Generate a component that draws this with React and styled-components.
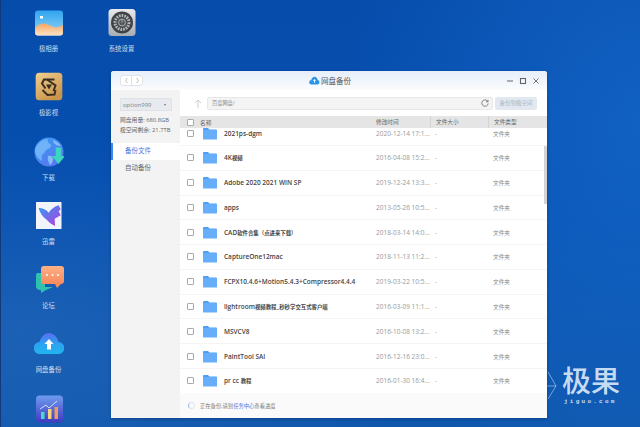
import * as React from 'react';
import styled, { createGlobalStyle } from 'styled-components';

const CJK = '"Open Sans", "Noto Sans CJK SC", sans-serif';

const GlobalStyle = createGlobalStyle`
  html, body { margin: 0; padding: 0; background: #0a52b2; }
  * { box-sizing: border-box; }
`;

const Desktop = styled.div`
  position: relative;
  width: 640px;
  height: 427px;
  overflow: hidden;
  font-family: ${CJK};
  border-left: 1px solid #123a78;
  background:
    radial-gradient(ellipse 420px 190px at 20px 330px, rgba(70, 130, 200, 0.28), rgba(70, 130, 200, 0) 100%),
    radial-gradient(ellipse 300px 420px at 640px 120px, rgba(30, 120, 220, 0.45), rgba(30, 120, 220, 0) 100%),
    linear-gradient(180deg, #064cab 0%, #0650b0 50%, #0f57ad 100%);
`;

const IconGrid = styled.div`
  display: grid;
  grid-auto-flow: column;
  grid-template-rows: repeat(7, 64.3px);
  grid-template-columns: repeat(2, 73px);
  padding: 8px 0 0 11px;
`;

const DeskItem = styled.div`
  display: flex;
  flex-direction: column;
  align-items: center;
`;

const DeskIcon = styled.svg`
  width: 30px;
  height: 30px;
  flex: none;
  display: block;
`;

const DeskLabel = styled.span`
  margin-top: 6px;
  font-size: 6.4px;
  line-height: 10px;
  color: rgba(255, 255, 255, 0.82);
`;

const Window = styled.div`
  position: absolute;
  left: 110px;
  top: 71px;
  width: 436px;
  height: 347px;
  display: flex;
  flex-direction: column;
  background: #fff;
  border-radius: 3px 3px 0 0;
  box-shadow: 0 1px 3px rgba(0, 20, 60, 0.35);
  overflow: hidden;
`;

const TitleBar = styled.div`
  position: relative;
  height: 19px;
  flex: none;
  display: flex;
  align-items: center;
  justify-content: space-between;
  padding: 0 7px 0 9px;
  background: linear-gradient(180deg, #e6eefb 0%, #fbfcfe 100%);
`;

const NavButtons = styled.div`
  display: flex;
  width: 23px;
  height: 11px;
  background: #fff;
  border: 1px solid #dfe3e8;
  border-radius: 3px;
`;

const NavButton = styled.span`
  flex: 1;
  display: flex;
  align-items: center;
  justify-content: center;
  color: #a9aeb5;
  & + & { border-left: 1px solid #dfe3e8; }
`;

const Title = styled.div`
  position: absolute;
  left: 198px;
  top: 0;
  height: 19px;
  display: flex;
  align-items: center;
  gap: 1px;
  font-size: 7.5px;
  color: #555;
`;

const WindowControls = styled.div`
  display: flex;
  gap: 5px;
  color: #666;
`;

const Body = styled.div`
  flex: 1;
  display: flex;
  min-height: 0;
`;

const Sidebar = styled.aside`
  width: 69px;
  flex: none;
  background: #f3f3f3;
  padding-top: 8px;
`;

const AccountSelect = styled.div`
  margin-left: 9px;
  width: 52px;
  height: 13px;
  display: flex;
  align-items: center;
  justify-content: space-between;
  padding: 0 5px 0 2px;
  font-size: 6px;
  color: #7d858e;
  background: #e7ebf0;
  border: 1px solid #dfe3e8;
`;

const Caret = styled.span`
  width: 0;
  height: 0;
  border-left: 1.5px solid transparent;
  border-right: 1.5px solid transparent;
  border-top: 2px solid #777;
`;

const Quota = styled.div`
  margin: 4px 0 8px 9px;
  font-size: 5.8px;
  line-height: 10px;
  color: #666;
  white-space: nowrap;
`;

const MenuItem = styled.div`
  height: 16.5px;
  line-height: 16.5px;
  padding-left: ${p => (p.$active ? '12px' : '14px')};
  font-size: 6.5px;
  color: ${p => (p.$active ? '#4a78e0' : '#666')};
  background: ${p => (p.$active ? '#fff' : 'transparent')};
  border-left: ${p => (p.$active ? '2px solid #3d86f0' : '0')};
`;

const Main = styled.main`
  position: relative;
  flex: 1;
  min-width: 0;
  display: flex;
  flex-direction: column;
`;

const Toolbar = styled.div`
  height: 26px;
  flex: none;
  display: flex;
  align-items: center;
  padding: 0 10px 0 14px;
`;

const UpArrow = styled.span`
  width: 13px;
  flex: none;
  display: flex;
  color: #c9ccd0;
`;

const PathField = styled.div`
  flex: 1;
  height: 13px;
  display: flex;
  align-items: center;
  justify-content: space-between;
  padding: 0 3px 0 4px;
  font-size: 5.2px;
  color: #888;
  background: #f4f4f4;
  border: 1px solid #e8e8e8;
  border-radius: 2px;
`;

const RefreshIcon = styled.span`
  display: flex;
  color: #666;
`;

const BackupButton = styled.div`
  width: 42px;
  height: 13px;
  flex: none;
  margin-left: 2px;
  text-align: center;
  font-size: 5.5px;
  line-height: 13px;
  color: #a9b4c2;
  background: #e2e8ef;
  border-radius: 2px;
`;

const HeaderRow = styled.div`
  height: 12px;
  flex: none;
  display: flex;
  align-items: center;
  background: #e5e5e5;
  font-size: 5.7px;
  color: #666;
`;

const Check = styled.span`
  width: 7px;
  height: 7px;
  flex: none;
  margin: 0 6px 0 7px;
  background: #fff;
  border: 1px solid #aaa;
  border-radius: 1px;
`;

const HeadName = styled.span`
  width: 171px;
  flex: none;
`;

const HeadCell = styled.span`
  width: ${p => p.$w}px;
  flex: none;
  height: 100%;
  line-height: 12px;
  padding-left: 5px;
  border-right: ${p => (p.$line ? '1px solid #d3d3d3' : '0')};
`;

const List = styled.div`
  flex: 1;
  min-height: 0;
  overflow: hidden;
`;

const Rows = styled.div`
  margin-top: -6.9px;
`;

const Row = styled.div`
  height: 24.8px;
  display: flex;
  align-items: center;
  font-size: 6.5px;
  border-bottom: 1px solid #f4f4f4;
`;

const RowCheck = styled(Check)`
  margin-right: 9px;
`;

const Folder = styled.svg`
  width: 14px;
  height: 13px;
  flex: none;
  margin-right: 7px;
`;

const RowName = styled.span`
  width: 152px;
  flex: none;
  font-size: 6.5px;
  font-weight: 600;
  color: #444;
  white-space: nowrap;
  overflow: hidden;
`;

const CjkRun = styled.span`
  font-size: 5.4px;
`;

const RowDate = styled.span`
  width: 59px;
  flex: none;
  color: #999;
  white-space: nowrap;
`;

const RowSize = styled.span`
  width: 58px;
  flex: none;
  color: #aaa;
`;

const RowType = styled.span`
  font-size: 5.7px;
  color: #8a8a8a;
`;

const ScrollThumb = styled.div`
  position: absolute;
  right: 0;
  top: 56px;
  width: 3px;
  height: 58px;
  background: #d4d4d4;
`;

const Footer = styled.div`
  height: 25px;
  flex: none;
  display: flex;
  align-items: center;
  gap: 5px;
  padding-left: 8px;
  font-size: 5.3px;
  color: #777;
  background: #fafafa;
`;

const Spinner = styled.span`
  width: 7px;
  height: 7px;
  border-radius: 50%;
  border: 1px solid #dfe5ef;
  border-left-color: #9db8e8;
`;

const TaskLink = styled.span`
  color: #4a78e0;
`;

const Watermark = styled.div`
  position: absolute;
  left: 561px;
  top: 364px;
  display: flex;
  flex-direction: column;
  color: rgba(225, 238, 252, 0.9);
`;

const WatermarkLogo = styled.span`
  font-family: "Noto Sans CJK SC", sans-serif;
  font-size: 29px;
  line-height: 31px;
  font-weight: 500;
`;

const WatermarkUrl = styled.span`
  margin-top: 3px;
  font-size: 6px;
  line-height: 8px;
  font-weight: 700;
  letter-spacing: 2.25px;
  padding-left: 2px;
  font-family: "Liberation Mono", monospace;
`;

const WatermarkMark = styled.svg`
  position: absolute;
  left: 529px;
  top: 370px;
  width: 28px;
  height: 32px;
`;

const AlbumIcon = () => (
  <DeskIcon viewBox="0 0 30 30">
    <defs>
      <linearGradient id="albumSky" x1="0" y1="0" x2="0" y2="1">
        <stop offset="0" stopColor="#2ea4f0" />
        <stop offset="1" stopColor="#9ad6f4" />
      </linearGradient>
      <linearGradient id="albumSand" x1="0" y1="0" x2="0" y2="1">
        <stop offset="0" stopColor="#f6a765" />
        <stop offset="1" stopColor="#fde3c4" />
      </linearGradient>
    </defs>
    <rect x="1" y="2.5" width="28" height="25" rx="3" fill="url(#albumSky)" />
    <path d="M1 20c6-6 11-5 16-2 4 2 8 2 12-1v7.5a3 3 0 0 1-3 3H4a3 3 0 0 1-3-3z" fill="url(#albumSand)" />
    <rect x="6" y="8" width="3" height="2.5" fill="#fff" />
  </DeskIcon>
);

const SettingsIcon = () => (
  <DeskIcon viewBox="0 0 30 30">
    <defs>
      <linearGradient id="settingsBg" x1="0" y1="0" x2="0" y2="1">
        <stop offset="0" stopColor="#e8eaec" />
        <stop offset="1" stopColor="#a8adb2" />
      </linearGradient>
    </defs>
    <rect x="1.5" y="1" width="27" height="27" rx="3.5" fill="url(#settingsBg)" />
    <circle cx="15" cy="14.5" r="11" fill="#404245" />
    <circle cx="15" cy="14.5" r="7" fill="none" stroke="#b4b7ba" strokeWidth="3" strokeDasharray="1.7 1" />
    <circle cx="15" cy="14.5" r="5" fill="#55585b" />
    <circle cx="15" cy="14.5" r="3.4" fill="none" stroke="#b9bcbf" strokeWidth="0.8" />
    <path d="M15 11.500v3" stroke="#c4c6c9" strokeWidth="0.8" />
  </DeskIcon>
);

const VideoIcon = () => (
  <DeskIcon viewBox="0 0 30 30">
    <defs>
      <linearGradient id="videoBg" x1="0" y1="0" x2="0.6" y2="1">
        <stop offset="0" stopColor="#f2d08f" />
        <stop offset="1" stopColor="#c8944a" />
      </linearGradient>
    </defs>
    <rect x="1.7" y="0.7" width="26.6" height="27.6" rx="3.5" fill="url(#videoBg)" />
    <g fill="none" stroke="#3a2f22" strokeWidth="2">
      <path d="M20.500 7.500H10L8 11.500l3.500 5" />
      <path d="M13 7.500l8.500 6-2 5.500" />
      <path d="M8.500 18l5 5 7-.5 1-4.500" />
    </g>
    <path d="M12 12.500h6l-3 5z" fill="#3a2f22" />
  </DeskIcon>
);

const DownloadIcon = () => (
  <DeskIcon viewBox="0 0 30 30">
    <defs>
      <linearGradient id="globe" x1="0.2" y1="0" x2="0.8" y2="1">
        <stop offset="0" stopColor="#3a9af5" />
        <stop offset="1" stopColor="#5c74ee" />
      </linearGradient>
    </defs>
    <circle cx="15" cy="15" r="14.5" fill="url(#globe)" />
    <path d="M5 6c3-3 6-4 9-4-1 2 0 4 2 5s1 4-2 5-3 4-5 5-1 5-1 7c-4-2-7-7-7-11 0-3 2-5 4-7z" fill="#6fb2f8" />
    <path d="M19 3c3 1 6 3 8 6-3 0-5-1-6-2s-2-2-2-4zM14 19c3-1 5 1 5 3s-1 5-3 6c-1-2-3-6-2-9z" fill="#82bcf9" />
    <path d="M21.700 10.500h5.600v8.500H31l-6.500 8L18 19h3.700z" fill="#3bd6bf" />
  </DeskIcon>
);

const ThunderIcon = () => (
  <DeskIcon viewBox="0 0 30 30">
    <defs>
      <linearGradient id="bird" x1="0" y1="0" x2="0.9" y2="1">
        <stop offset="0" stopColor="#2f9cf5" />
        <stop offset="1" stopColor="#b23fe0" />
      </linearGradient>
    </defs>
    <rect x="2" y="1" width="25.500" height="27" rx="0.500" fill="#f1f4fd" />
    <path d="M4.700 7c4 0 7.500 1.500 10 4.700 2.500-3.500 6-6.700 10-7.400l2 4-2 2 2 4-6 3.400.300 7.300c-3-1.500-6-3.500-8-6C8.500 16 6 12 4.700 7z" fill="url(#bird)" />
  </DeskIcon>
);

const ForumIcon = () => (
  <DeskIcon viewBox="0 0 30 30">
    <defs>
      <linearGradient id="bubble" x1="0" y1="0" x2="0" y2="1">
        <stop offset="0" stopColor="#fcb186" />
        <stop offset="1" stopColor="#f88a5c" />
      </linearGradient>
    </defs>
    <path d="M3 8h8v14h8l-7 3-5 3v-3c-3 0-5-1-5-4V10c0-1 1-2 1-2z" fill="#2fc2ae" />
    <rect x="7" y="1" width="23" height="18" rx="3" fill="url(#bubble)" />
    <path d="M21 19h6l-4 4z" fill="#f88a5c" />
    <circle cx="13" cy="10" r="1.100" fill="#fff" />
    <circle cx="18.500" cy="10" r="1.100" fill="#fff" />
    <circle cx="24" cy="10" r="1.100" fill="#fff" />
  </DeskIcon>
);

const BackupIcon = () => (
  <DeskIcon viewBox="0 0 30 30">
    <defs>
      <linearGradient id="cloudFill" x1="0" y1="0" x2="0" y2="1">
        <stop offset="0" stopColor="#5a6cf0" />
        <stop offset="0.5" stopColor="#2ea0f2" />
        <stop offset="1" stopColor="#1fb6ee" />
      </linearGradient>
    </defs>
    <path d="M6 25a6 6 0 0 1-.5-12C7 8 10.500 4 15 4s8 3.500 9.500 9A6 6 0 0 1 24 25z" fill="url(#cloudFill)" />
    <path d="M15 10l4.500 5H17v5.500h-4V15h-2.500z" fill="#fff" />
  </DeskIcon>
);

const StatsIcon = () => (
  <DeskIcon viewBox="0 0 30 30">
    <defs>
      <linearGradient id="statsBg" x1="0" y1="0" x2="0" y2="1">
        <stop offset="0" stopColor="#6f9bef" />
        <stop offset="1" stopColor="#3e3bbf" />
      </linearGradient>
    </defs>
    <rect x="2" y="1.5" width="27" height="27" rx="3.5" fill="url(#statsBg)" />
    <path d="M6 15l6-4 3 3 8-7" fill="none" stroke="#cfe0ff" strokeWidth="1" />
    <rect x="7" y="18" width="3.500" height="7" fill="#4cd6d0" />
    <rect x="14" y="15" width="3.500" height="10" fill="#f5d27e" />
    <rect x="20.500" y="13" width="3.500" height="12" fill="#f39a5e" />
  </DeskIcon>
);

const FolderIcon = () => (
  <Folder viewBox="0 0 14 13">
    <path d="M0 2a1 1 0 0 1 1-1h4l1.500 1.500H13a1 1 0 0 1 1 1V5H0z" fill="#4d9ff5" />
    <rect x="0" y="3" width="14" height="9.500" rx="0.500" fill="#66adfa" />
  </Folder>
);

const desktopItems = [
  { label: '极相册', Icon: AlbumIcon },
  { label: '极影视', Icon: VideoIcon },
  { label: '下载', Icon: DownloadIcon },
  { label: '迅雷', Icon: ThunderIcon },
  { label: '论坛', Icon: ForumIcon },
  { label: '网盘备份', Icon: BackupIcon },
  { label: '', Icon: StatsIcon },
  { label: '系统设置', Icon: SettingsIcon },
];

const files = [
  { name: '2021ps-dgm', date: '2020-12-14 17:1...' },
  { name: '4K视频', date: '2016-04-08 15:2...' },
  { name: 'Adobe 2020 2021 WIN SP', date: '2019-12-24 13:3...' },
  { name: 'apps', date: '2013-05-26 10:5...' },
  { name: 'CAD软件合集（点进来下载）', date: '2018-03-14 14:0...' },
  { name: 'CaptureOne12mac', date: '2018-11-13 11:2...' },
  { name: 'FCPX10.4.6+Motion5.4.3+Compressor4.4.4', date: '2019-03-22 10:5...' },
  { name: 'lightroom视频教程_秒秒学交互式客户端', date: '2016-03-09 11:1...' },
  { name: 'MSVCV8', date: '2016-10-08 13:2...' },
  { name: 'PaintTool SAI', date: '2016-12-16 23:0...' },
  { name: 'pr cc 教程', date: '2016-01-30 16:4...' },
];

// the chinese glyphs sit smaller than the latin ones in these names
const splitName = name => name.split(/([\u3000-\u9fff\uff00-\uffef]+)/).map((part, i) => (
  i % 2 ? <CjkRun key={part}>{part}</CjkRun> : part
));

const Chevron = ({ d }) => (
  <svg width="5" height="7" viewBox="0 0 5 7" fill="none" stroke="currentColor" strokeWidth="0.8">
    <path d={d} />
  </svg>
);

const App = () => (
  <Desktop>
    <GlobalStyle />
    <IconGrid>
      {desktopItems.map(({ label, Icon }) => (
        <DeskItem key={label || 'stats'}>
          <Icon />
          {label && <DeskLabel>{label}</DeskLabel>}
        </DeskItem>
      ))}
    </IconGrid>

    <WatermarkMark viewBox="0 0 28 32" fill="none" stroke="rgba(255,255,255,0.55)" strokeWidth="0.8">
      <path d="M18 2l8 14-8 13M0 16h26" />
    </WatermarkMark>
    <Watermark>
      <WatermarkLogo>极果</WatermarkLogo>
      <WatermarkUrl>jiguo.com</WatermarkUrl>
    </Watermark>

    <Window>
      <TitleBar>
        <NavButtons>
          <NavButton><Chevron d="M3.500 1L1.500 3.500 3.500 6" /></NavButton>
          <NavButton><Chevron d="M1.500 1L3.500 3.500 1.500 6" /></NavButton>
        </NavButtons>
        <Title>
          <svg width="11" height="9" viewBox="0 0 11 9">
            <path d="M2.500 8.500a2.200 2.200 0 0 1-.3-4.400C2.600 2 4 .7 5.500.7s3 1.300 3.300 3.300a2.300 2.300 0 0 1-.4 4.500z" fill="#2a95ea" />
            <path d="M5.500 3l1.500 1.800H6v2H5v-2H4z" fill="#fff" />
          </svg>
          网盘备份
        </Title>
        <WindowControls>
          <svg width="8" height="8" viewBox="0 0 8 8" stroke="currentColor" strokeWidth="1.100" fill="none"><path d="M1 4h6" /></svg>
          <svg width="8" height="8" viewBox="0 0 8 8" stroke="currentColor" strokeWidth="1.100" fill="none"><rect x="1.500" y="1.500" width="5" height="5" /></svg>
          <svg width="8" height="8" viewBox="0 0 8 8" stroke="currentColor" strokeWidth="0.900" fill="none"><path d="M1.500 1.500l5 5M6.500 1.500l-5 5" /></svg>
        </WindowControls>
      </TitleBar>
      <Body>
        <Sidebar>
          <AccountSelect>option999<Caret /></AccountSelect>
          <Quota>
            网盘用量: 680.8GB<br />
            极空间剩余: 21.7TB
          </Quota>
          <MenuItem $active>备份文件</MenuItem>
          <MenuItem>自动备份</MenuItem>
        </Sidebar>
        <Main>
          <Toolbar>
            <UpArrow>
              <svg width="8" height="9" viewBox="0 0 8 9" fill="none" stroke="currentColor" strokeWidth="1"><path d="M4 9V1M1 4l3-3 3 3" /></svg>
            </UpArrow>
            <PathField>
              百度网盘/
              <RefreshIcon>
                <svg width="8" height="8" viewBox="0 0 8 8" fill="none" stroke="currentColor" strokeWidth="0.800"><path d="M6.800 2.500A3.200 3.200 0 1 0 7.200 4.500M7 .8v2H5" /></svg>
              </RefreshIcon>
            </PathField>
            <BackupButton>备份到极空间</BackupButton>
          </Toolbar>
          <HeaderRow>
            <Check />
            <HeadName>名称</HeadName>
            <HeadCell $w={60} $line>修改时间</HeadCell>
            <HeadCell $w={58} $line>文件大小</HeadCell>
            <HeadCell $w={59}>文件类型</HeadCell>
          </HeaderRow>
          <List>
            <Rows>
              {files.map(file => (
                <Row key={file.name}>
                  <RowCheck />
                  <FolderIcon />
                  <RowName>{splitName(file.name)}</RowName>
                  <RowDate>{file.date}</RowDate>
                  <RowSize>-</RowSize>
                  <RowType>文件夹</RowType>
                </Row>
              ))}
            </Rows>
          </List>
          <ScrollThumb />
          <Footer>
            <Spinner />
            <span>正在备份,请到<TaskLink>任务中心</TaskLink>查看进度</span>
          </Footer>
        </Main>
      </Body>
    </Window>
  </Desktop>
);

export default App;
